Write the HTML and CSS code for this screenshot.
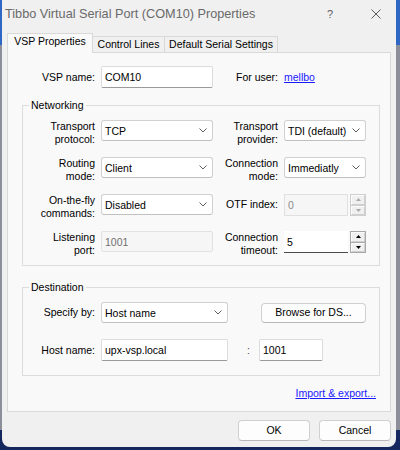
FILE: index.html
```html
<!DOCTYPE html>
<html>
<head>
<meta charset="utf-8">
<title>Tibbo Virtual Serial Port (COM10) Properties</title>
<link rel="stylesheet" href="styles.css">
</head>
<body>
<div class="window">
  <div class="titlebar">
    <span class="title">Tibbo Virtual Serial Port (COM10) Properties</span>
    <span class="help">?</span>
    <svg class="close" width="10" height="10" viewBox="0 0 10 10"><path d="M0.5 0.5L9.5 9.5M9.5 0.5L0.5 9.5" stroke="#5c5c5c" stroke-width="1" fill="none"/></svg>
  </div>

  <div class="tabs">
    <div class="tab active tab-vsp">VSP Properties</div>
    <div class="tab tab-cl">Control Lines</div>
    <div class="tab tab-dss">Default Serial Settings</div>
  </div>

  <div class="panel">
    <div class="toprow">
      <span class="lbl single lbl-top1">VSP name:</span>
      <div class="edit w112">COM10</div>
      <span class="lbl single lbl-top2">For user:</span>
      <a class="link">mellbo</a>
    </div>

    <fieldset class="group net">
      <legend>Networking</legend>
      <div class="netgrid">
        <span class="lbl">Transport<br>protocol:</span>
        <div class="combo"><span>TCP</span><svg class="chev" width="8" height="5" viewBox="0 0 8 5"><polyline points="0.5,0.5 4,4 7.5,0.5" fill="none" stroke="#606060" stroke-width="1"/></svg></div>
        <span class="lbl">Transport<br>provider:</span>
        <div class="combo"><span>TDI (default)</span><svg class="chev" width="8" height="5" viewBox="0 0 8 5"><polyline points="0.5,0.5 4,4 7.5,0.5" fill="none" stroke="#606060" stroke-width="1"/></svg></div>

        <span class="lbl">Routing<br>mode:</span>
        <div class="combo"><span>Client</span><svg class="chev" width="8" height="5" viewBox="0 0 8 5"><polyline points="0.5,0.5 4,4 7.5,0.5" fill="none" stroke="#606060" stroke-width="1"/></svg></div>
        <span class="lbl">Connection<br>mode:</span>
        <div class="combo"><span>Immediatly</span><svg class="chev" width="8" height="5" viewBox="0 0 8 5"><polyline points="0.5,0.5 4,4 7.5,0.5" fill="none" stroke="#606060" stroke-width="1"/></svg></div>

        <span class="lbl">On-the-fly<br>commands:</span>
        <div class="combo"><span>Disabled</span><svg class="chev" width="8" height="5" viewBox="0 0 8 5"><polyline points="0.5,0.5 4,4 7.5,0.5" fill="none" stroke="#606060" stroke-width="1"/></svg></div>
        <span class="lbl single">OTF index:</span>
        <div class="spin disabled">
          <div class="field">0</div>
          <div class="btns">
            <div class="sbtn"><svg width="5" height="3" viewBox="0 0 5 3"><polygon points="0,3 2.5,0 5,3" fill="#a8a8a8"/></svg></div>
            <div class="sbtn"><svg width="5" height="3" viewBox="0 0 5 3"><polygon points="0,0 5,0 2.5,3" fill="#a8a8a8"/></svg></div>
          </div>
        </div>

        <span class="lbl">Listening<br>port:</span>
        <div class="edit disabled-edit">1001</div>
        <span class="lbl">Connection<br>timeout:</span>
        <div class="spin">
          <div class="field">5</div>
          <div class="btns">
            <div class="sbtn"><svg width="5" height="3" viewBox="0 0 5 3"><polygon points="0,3 2.5,0 5,3" fill="#000"/></svg></div>
            <div class="sbtn"><svg width="5" height="3" viewBox="0 0 5 3"><polygon points="0,0 5,0 2.5,3" fill="#000"/></svg></div>
          </div>
        </div>
      </div>
    </fieldset>

    <fieldset class="group dest">
      <legend>Destination</legend>
      <div class="destrows">
        <div class="drow">
          <span class="lbl single w72">Specify by:</span>
          <div class="combo w127"><span>Host name</span><svg class="chev" width="8" height="5" viewBox="0 0 8 5"><polyline points="0.5,0.5 4,4 7.5,0.5" fill="none" stroke="#606060" stroke-width="1"/></svg></div>
          <button class="btn browse">Browse for DS...</button>
        </div>
        <div class="drow">
          <span class="lbl single w72">Host name:</span>
          <div class="edit w127">upx-vsp.local</div>
          <span class="colon">:</span>
          <div class="edit port">1001</div>
        </div>
      </div>
    </fieldset>

    <div class="linkrow"><a class="link">Import &amp; export...</a></div>
  </div>

  <div class="buttons">
    <button class="btn dlg">OK</button>
    <button class="btn dlg">Cancel</button>
  </div>
</div>
</body>
</html>
```

FILE: styles.css
```css
* { box-sizing: border-box; }
html, body { margin: 0; padding: 0; }
body {
  width: 400px;
  height: 450px;
  overflow: hidden;
  background: linear-gradient(to bottom, #2f67c4 0, #2f67c4 45px, #8c8f99 45px, #8c8f99 430px, #15275f 430px);
  font-family: "Liberation Sans", Arial, sans-serif;
  font-size: 10.5px;
  color: #000;
}
.window {
  margin-left: 2px;
  width: 394px;
  height: 447px;
  background: #f0f0f0;
  border-radius: 0 0 8px 8px;
  display: flex;
  flex-direction: column;
}
.titlebar {
  height: 33px;
  display: flex;
  align-items: flex-start;
  padding: 7px 15px 0 3px;
}
.title {
  flex: 1;
  font-size: 12.7px;
  line-height: 15px;
  color: #6a6a6a;
  white-space: nowrap;
}
.help {
  font-size: 11px;
  line-height: 15px;
  color: #5c5c5c;
  margin-right: 38px;
}
.close { margin-top: 2px; }

.tabs {
  display: flex;
  align-items: flex-end;
  height: 19px;
  margin-left: 5px;
}
.tab {
  height: 16px;
  border: 1px solid #d9d9d9;
  border-bottom: none;
  border-left: none;
  background: #f0f0f0;
  display: flex;
  align-items: center;
  justify-content: center;
  line-height: 13px;
  white-space: nowrap;
}
.tab.active {
  height: 20px;
  border-left: 1px solid #d9d9d9;
  background: #f9f9f9;
  margin-bottom: -1px;
  position: relative;
  z-index: 1;
  align-items: flex-start;
  padding-top: 1px;
}
.tab-vsp { width: 86px; }
.tab-cl { width: 72px; }
.tab-dss { width: 113px; }

.panel {
  height: 360px;
  margin: 0 5px;
  border: 1px solid #d9d9d9;
  background: #f9f9f9;
  padding: 13px 10px 0 14px;
  display: flex;
  flex-direction: column;
}
.lbl {
  text-align: right;
  line-height: 13px;
  white-space: nowrap;
}
.lbl.single { line-height: 21px; }

.toprow {
  display: flex;
  align-items: center;
  height: 22px;
}
.lbl-top1 { width: 73px; margin-right: 6px; }
.lbl-top2 { width: 59px; margin: 0 6px; }
.w112 { width: 112px; }
.w127 { width: 127px; }
.w72 { width: 72px; margin-right: 6px; }

.link {
  color: #1a1aff;
  text-decoration: underline;
  cursor: pointer;
}

.edit {
  height: 22px;
  background: #fff;
  border: 1px solid #dcdcdc;
  border-bottom-color: #9a9a9a;
  border-radius: 2px;
  padding: 0 3px;
  display: flex;
  align-items: center;
  white-space: nowrap;
}
.edit.disabled-edit {
  height: 21px;
  background: #f6f6f6;
  border-color: #e2e2e2;
  color: #707070;
}
.combo {
  height: 21px;
  background: #fff;
  border: 1px solid #d0d0d0;
  border-bottom-color: #c0c0c0;
  border-radius: 3px;
  padding: 0 5px 0 3px;
  display: flex;
  align-items: center;
  justify-content: space-between;
  white-space: nowrap;
}
.chev { flex: none; }

.group {
  margin: 10px 0 0 0;
  border: 1px solid #dcdcdc;
  padding: 8px 0 8px 0;
  min-width: 0;
}
.group legend {
  margin-left: 6px;
  padding: 0 2px;
  line-height: 14px;
}
.dest { margin-top: 14px; padding-bottom: 14px; }

.netgrid {
  display: grid;
  grid-template-columns: 72px 112px 59px 82px;
  column-gap: 6px;
  row-gap: 11px;
  align-items: start;
}

.spin {
  height: 22px;
  display: flex;
  gap: 2px;
}
.spin .field {
  flex: 1;
  background: #fff;
  border-bottom: 1px solid #4a4a4a;
  padding: 0 3px;
  display: flex;
  align-items: center;
}
.spin .btns {
  width: 16px;
  display: flex;
  flex-direction: column;
  border: 1px solid #a8a8a8;
  background: #a8a8a8;
  gap: 1px;
}
.sbtn {
  flex: 1;
  background: #f0f0f0;
  border: 1px solid #fdfdfd;
  border-right-color: #d0d0d0;
  border-bottom-color: #d0d0d0;
  display: flex;
  align-items: center;
  justify-content: center;
}
.spin.disabled .field {
  background: #f6f6f6;
  border: 1px solid #e0e0e0;
  color: #8a8a8a;
}
.spin.disabled .btns {
  border-color: #cfcfcf;
  background: #cfcfcf;
}

.destrows {
  display: flex;
  flex-direction: column;
  gap: 16px;
}
.drow {
  display: flex;
  align-items: center;
}
.btn {
  font-family: "Liberation Sans", Arial, sans-serif;
  font-size: 10.5px;
  color: #000;
  background: #fdfdfd;
  border: 1px solid #d0d0d0;
  border-bottom-color: #b8b8b8;
  border-radius: 4px;
  padding: 0;
  line-height: 13px;
}
.browse {
  width: 105px;
  height: 20px;
  margin-left: 33px;
}
.colon {
  margin-left: 19px;
  width: 4px;
  color: #5a3f52;
}
.port {
  width: 64px;
  margin-left: 8px;
}

.linkrow {
  margin-top: 10px;
  height: 14px;
  line-height: 14px;
  text-align: right;
  padding-right: 4px;
}

.buttons {
  display: flex;
  justify-content: flex-end;
  gap: 9px;
  margin: 8px 5px 0 0;
}
.dlg {
  width: 72px;
  height: 21px;
}
```
